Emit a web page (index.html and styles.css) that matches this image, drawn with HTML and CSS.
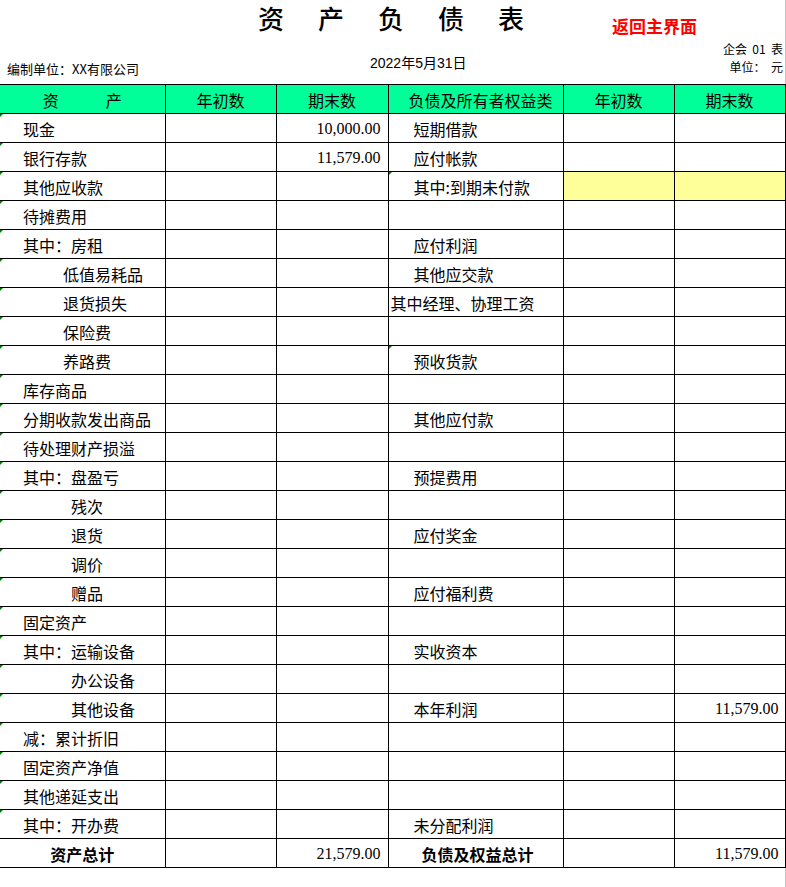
FILE: index.html
```html
<!DOCTYPE html>
<html lang="zh">
<head>
<meta charset="utf-8">
<title>资产负债表</title>
<link rel="stylesheet" href="styles.css">
</head>
<body>
<div class="page">
  <div class="top">
    <h1 class="title">资产负债表</h1>
    <a class="back" href="#">返回主界面</a>
  </div>
  <div class="meta">
    <div class="unit">编制单位：XX有限公司</div>
    <div class="date">2022年5月31日</div>
    <div class="form">
      <div class="fl">企会&nbsp;&nbsp;01&nbsp;&nbsp;表</div>
      <div class="fl">单位：&nbsp;&nbsp;元</div>
    </div>
  </div>
  <table class="sheet">
    <colgroup>
      <col class="c1"><col class="c2"><col class="c3"><col class="c4"><col class="c5"><col class="c6">
    </colgroup>
    <thead>
      <tr>
        <th><span class="sp">资</span>产</th>
        <th>年初数</th>
        <th>期末数</th>
        <th class="hl">负债及所有者权益类</th>
        <th>年初数</th>
        <th>期末数</th>
      </tr>
    </thead>
    <tbody>
      <tr><td class="a i1 mk">现金</td><td></td><td class="n">10,000.00</td><td class="l r1">短期借款</td><td></td><td></td></tr>
      <tr><td class="a i1 mk">银行存款</td><td></td><td class="n">11,579.00</td><td class="l r1">应付帐款</td><td></td><td></td></tr>
      <tr><td class="a i1 mk">其他应收款</td><td></td><td></td><td class="l r1 mk">其中:到期未付款</td><td class="y"></td><td class="y"></td></tr>
      <tr><td class="a i1 mk">待摊费用</td><td></td><td></td><td class="l"></td><td></td><td></td></tr>
      <tr><td class="a i1 mk">其中：房租</td><td></td><td></td><td class="l r1">应付利润</td><td></td><td></td></tr>
      <tr><td class="a i2 mk">低值易耗品</td><td></td><td></td><td class="l r1">其他应交款</td><td></td><td></td></tr>
      <tr><td class="a i2 mk">退货损失</td><td></td><td></td><td class="l r0">其中经理、协理工资</td><td></td><td></td></tr>
      <tr><td class="a i2 mk">保险费</td><td></td><td></td><td class="l"></td><td></td><td></td></tr>
      <tr><td class="a i2 mk">养路费</td><td></td><td></td><td class="l r1 mk">预收货款</td><td></td><td></td></tr>
      <tr><td class="a i1 mk">库存商品</td><td></td><td></td><td class="l"></td><td></td><td></td></tr>
      <tr><td class="a i1 mk">分期收款发出商品</td><td></td><td></td><td class="l r1">其他应付款</td><td></td><td></td></tr>
      <tr><td class="a i1 mk">待处理财产损溢</td><td></td><td></td><td class="l"></td><td></td><td></td></tr>
      <tr><td class="a i1 mk">其中：盘盈亏</td><td></td><td></td><td class="l r1">预提费用</td><td></td><td></td></tr>
      <tr><td class="a i3 mk">残次</td><td></td><td></td><td class="l"></td><td></td><td></td></tr>
      <tr><td class="a i3 mk">退货</td><td></td><td></td><td class="l r1">应付奖金</td><td></td><td></td></tr>
      <tr><td class="a i3 mk">调价</td><td></td><td></td><td class="l"></td><td></td><td></td></tr>
      <tr><td class="a i3 mk">赠品</td><td></td><td></td><td class="l r1">应付福利费</td><td></td><td></td></tr>
      <tr><td class="a i1 mk">固定资产</td><td></td><td></td><td class="l"></td><td></td><td></td></tr>
      <tr><td class="a i1 mk">其中：运输设备</td><td></td><td></td><td class="l r1">实收资本</td><td></td><td></td></tr>
      <tr><td class="a i3 mk">办公设备</td><td></td><td></td><td class="l"></td><td></td><td></td></tr>
      <tr><td class="a i3 mk">其他设备</td><td></td><td></td><td class="l r1">本年利润</td><td></td><td class="n">11,579.00</td></tr>
      <tr><td class="a i1 mk">减：累计折旧</td><td></td><td></td><td class="l"></td><td></td><td></td></tr>
      <tr><td class="a i1 mk">固定资产净值</td><td></td><td></td><td class="l"></td><td></td><td></td></tr>
      <tr><td class="a i1 mk">其他递延支出</td><td></td><td></td><td class="l"></td><td></td><td></td></tr>
      <tr><td class="a i1 mk">其中：开办费</td><td></td><td></td><td class="l r1">未分配利润</td><td></td><td></td></tr>
      <tr class="total"><td class="a tc">资产总计</td><td></td><td class="n">21,579.00</td><td class="l rt">负债及权益总计</td><td></td><td class="n">11,579.00</td></tr>
    </tbody>
  </table>
</div>
</body>
</html>
```

FILE: styles.css
```css
html, body {
  margin: 0;
  padding: 0;
  background: #ffffff;
}

body {
  font-family: "Noto Sans CJK SC", "Liberation Sans", sans-serif;
  color: #000000;
}

.page {
  width: 785px;
  min-height: 887px;
  border-right: 1px solid #c4c4c4;
}

.top {
  display: flex;
  align-items: flex-start;
  height: 40px;
}

.title {
  margin: 3px 0 0 258px;
  font-size: 26px;
  line-height: 30px;
  font-weight: 500;
  letter-spacing: 34px;
  white-space: nowrap;
}

.back {
  margin: 15px 0 0 54px;
  font-size: 17px;
  line-height: 22px;
  font-weight: 700;
  color: #ff0000;
  text-decoration: none;
  white-space: nowrap;
}

.meta {
  display: flex;
  align-items: flex-start;
  height: 44px;
}

.unit {
  width: 363px;
  padding: 21px 0 0 7px;
  font-size: 13px;
  line-height: 16px;
  white-space: nowrap;
}

.date {
  padding-top: 15px;
  font-family: "Liberation Sans", "Noto Sans CJK SC", sans-serif;
  font-size: 14px;
  line-height: 17px;
  white-space: nowrap;
}

.form {
  margin-left: auto;
  padding: 0 2px 0 0;
  font-size: 12px;
  text-align: right;
  white-space: nowrap;
  display: flex;
  flex-direction: column;
}

.fl {
  line-height: 17.5px;
}

.sheet {
  table-layout: fixed;
  border-collapse: collapse;
  width: 785px;
  font-size: 16px;
}

.c1 { width: 165px; }
.c2 { width: 111px; }
.c3 { width: 112px; }
.c4 { width: 175px; }
.c5 { width: 111px; }
.c6 { width: 111px; }

.sheet th,
.sheet td {
  border: 1px solid #000000;
  height: 26px;
  padding: 2px 0 0 0;
  line-height: 20px;
  vertical-align: middle;
  white-space: nowrap;
  overflow: hidden;
}

.sheet tr > :first-child {
  border-left: none;
}

.sheet th {
  background: #00ff99;
  font-weight: 400;
  text-align: center;
}

.sheet th.hl {
  padding-left: 10px;
}

.sp {
  margin-right: 47px;
}

.sheet td.a,
.sheet td.l {
  position: relative;
  text-align: left;
}

.sheet td.i1 { padding-left: 23px; }
.sheet td.i2 { padding-left: 63px; }
.sheet td.i3 { padding-left: 71px; }
.sheet td.r1 { padding-left: 25px; }
.sheet td.r0 { padding-left: 2px; }

.sheet td.tc {
  padding-left: 0;
  text-align: center;
  font-weight: 700;
}

.sheet td.rt {
  padding-left: 33px;
  font-weight: 700;
}

.sheet td.n {
  text-align: right;
  padding-right: 7px;
  font-family: "Liberation Serif", serif;
  font-size: 16px;
}

.sheet td.n:last-child {
  padding-right: 6px;
}

.y {
  background: #ffff99;
}

.mk::before {
  content: "";
  position: absolute;
  left: 0;
  top: 0;
  border-top: 3px solid #008000;
  border-right: 3px solid transparent;
}
```
